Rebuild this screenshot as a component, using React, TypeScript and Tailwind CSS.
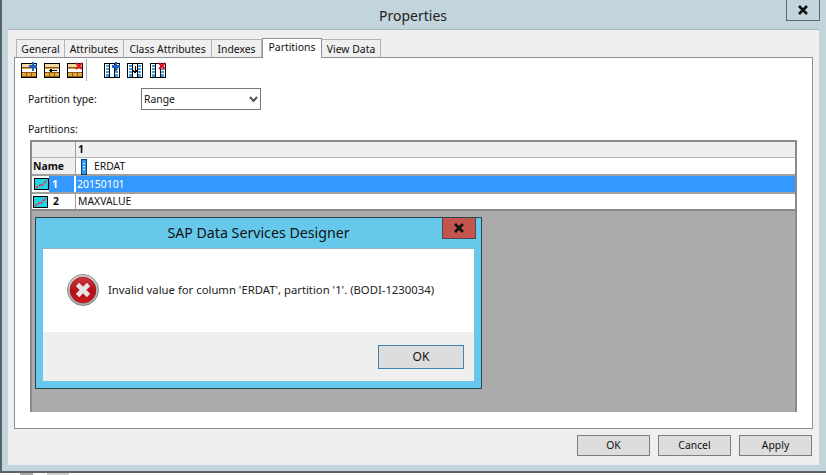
import type { ReactNode } from "react"

const ui = { fontFamily: '"Noto Sans", sans-serif' }

const Frame = ({ children }: { children: ReactNode }) => (
  <svg width="16" height="16" viewBox="0 0 16 16" shapeRendering="crispEdges" className="block">
    {children}
  </svg>
)

const RowsBase = () => (
  <>
    <rect x="0.5" y="1.5" width="15" height="14" fill="#fff" stroke="#000" />
    <path d="M1 2h14v3H1z" fill="#f3d9a6" />
    <path d="M1 6h14v1H1z" fill="#d8a040" />
    <path d="M1 11h14v3H1z" fill="#e3a63a" />
    <path d="M1 14h14v1H1z" fill="#8a5a10" />
    <path d="M1 5.5h14M1 10.5h14M5.5 11v3M10.5 11v3" stroke="#8a5a10" />
  </>
)

const ColsBase = () => (
  <>
    <rect x="0.5" y="1.5" width="15" height="14" fill="#fff" stroke="#000" />
    <path d="M2 3h3v12H2zM11 3h3v12h-3z" fill="#3f9fe0" />
    <path d="M2 5.5h3M2 8.5h3M2 11.5h3M11 5.5h3M11 8.5h3M11 11.5h3" stroke="#fff" />
    <path d="M5.5 2v13M10.5 2v13" stroke="#000" />
  </>
)

const Plus = () => <path d="M11 0h2v3h3v3h-3v3h-2V6H8V3h3z" fill="#1f5fc4" />
const Cross = () => <path d="M9 1l6 6M15 1l-6 6" stroke="#e8101c" strokeWidth="2" shapeRendering="auto" fill="none" />

const RangeIcon = () => (
  <svg width="15" height="12" viewBox="0 0 15 12" shapeRendering="crispEdges" className="block">
    <rect x="0.5" y="0.5" width="14" height="11" fill="#22d3e6" stroke="#000" />
    <path d="M2 10l4-3 1 1 5-5 1-1" stroke="#e8304a" strokeWidth="1.6" strokeDasharray="2.5 1" fill="none" shapeRendering="auto" />
  </svg>
)

const WinButton = ({ label, className }: { label: string; className: string }) => (
  <div className={`flex items-center justify-center border bg-[#dddddd] text-[#111] ${className}`}>{label}</div>
)

const CloseX = () => (
  <svg width="14" height="10" viewBox="0 0 14 10">
    <path d="M3 1l8 8M11 1L3 9" stroke="#111" strokeWidth="2.6" />
  </svg>
)

const tabs = ["General", "Attributes", "Class Attributes", "Indexes", "Partitions", "View Data"]
const tabWidths = [49, 59, 88, 50, 60, 59]

export default function App() {
  return (
    <div className="relative h-[475px] w-[826px] overflow-hidden bg-white text-[10.4px] text-[#111]" style={ui}>
      <div className="flex h-[473px] flex-col border-b-2 border-l-2 border-[#59636b] bg-[#c3d5dc]">
        {/* title bar */}
        <div className="relative flex h-[29px] shrink-0 items-center justify-center pr-[2px] pt-[2px] text-[14px] text-[#222]">
          Properties
          <div className="absolute right-[6px] top-0 flex h-[21px] w-[34px] items-center justify-center border-x border-b border-[#5e6670]">
            <CloseX />
          </div>
        </div>

        <div className="ml-[6px] mr-[7px] flex h-[436px] flex-col border-t border-[#a9b6bd] bg-[#efefef] px-[6px]">
          {/* tabs */}
          <div className="flex h-[27px] shrink-0 items-end pl-[2px]">
            {tabs.map((t, i) =>
              t === "Partitions" ? (
                <div
                  key={t}
                  style={{ width: tabWidths[i] }}
                  className="relative z-10 -mb-px flex h-[20px] items-center justify-center border-x border-t border-[#8d8f96] bg-white pb-[1px]"
                >
                  {t}
                </div>
              ) : (
                <div
                  key={t}
                  style={{ width: tabWidths[i] }}
                  className="flex h-[18px] items-center justify-center border-r border-t border-[#b4b4b8] bg-[#efefef] pt-[2px] first:border-l"
                >
                  {t}
                </div>
              ),
            )}
          </div>

          {/* pane */}
          <div className="flex h-[372px] shrink-0 flex-col border border-[#8d8f96] bg-white">
            <div className="flex h-[23px] shrink-0 items-center gap-[7px] pl-[6px]">
              <Frame><RowsBase /><Plus /></Frame>
              <Frame>
                <RowsBase />
                <path d="M13 8.5H6M8.5 6.5L6 8.5l2.5 2" stroke="#000" fill="none" />
              </Frame>
              <Frame><RowsBase /><Cross /></Frame>
              <div className="-ml-[4px] h-[22px] w-px bg-[#a8a8a8]" />
              <div className="w-[3px]" />
              <Frame><ColsBase /><Plus /></Frame>
              <Frame>
                <ColsBase />
                <path d="M8 4v6M6 8l2 3 2-3" stroke="#000" fill="none" />
              </Frame>
              <Frame><ColsBase /><Cross /></Frame>
            </div>

            <div className="ml-[13px] mt-[7px] flex h-[22px] shrink-0 items-center">
              <div className="w-[113px] pt-[2px]">Partition type:</div>
              <div className="flex h-[22px] w-[120px] items-center justify-between border border-[#777] bg-white pl-[2px] pr-[2px] pt-[1px]">
                Range
                <svg width="9" height="7" viewBox="0 0 9 7">
                  <path d="M1 1l3.5 4L8 1" stroke="#555" strokeWidth="2" fill="none" />
                </svg>
              </div>
            </div>

            <div className="ml-[13px] mt-[9px] h-[21px] shrink-0 leading-[20px]">Partitions:</div>

            {/* grid */}
            <div className="mx-[15px] flex h-[272px] shrink-0 flex-col border-2 border-b-0 border-[#8a8a8a] bg-[#ababab]">
              <div className="flex h-[16px] shrink-0 border-b border-[#b4b4b4] bg-[#efefef] font-bold">
                <div className="w-[44px] border-r border-[#a0a0a0]" />
                <div className="pl-[2px] leading-[15px]">1</div>
              </div>
              <div className="flex h-[18px] shrink-0 border-b-2 border-[#a0a0a0] bg-white">
                <div className="flex w-[44px] items-center border-r border-[#a0a0a0] bg-[#efefef] pl-[1px] pt-[1px] font-bold">Name</div>
                <div className="flex items-center gap-[7px] pl-[5px] pt-[1px]">
                  <svg width="6" height="16" viewBox="0 0 6 16" shapeRendering="crispEdges" className="block">
                    <rect x="0.5" y="0.5" width="5" height="15" fill="#2f9cf0" stroke="#0b3d78" />
                    <path d="M2 4h2M2 7h2M2 10h2" stroke="#d8f0ff" />
                  </svg>
                  ERDAT
                </div>
              </div>
              <div className="flex h-[18px] shrink-0 border-b-2 border-[#a0a0a0] bg-[#3399ff] text-white">
                <div className="flex w-[44px] items-center border-r-2 border-white bg-[#3399ff] font-bold">
                  <div className="flex h-full w-[17px] items-center justify-center bg-white pl-[1px]"><RangeIcon /></div>
                  <span className="pl-[3px] pt-[1px]">1</span>
                </div>
                <div className="flex items-center pl-[1px] pt-[2px]">20150101</div>
              </div>
              <div className="flex h-[17px] shrink-0 border-b-2 border-[#8a8a8a] bg-white">
                <div className="flex w-[44px] items-center border-r border-[#a0a0a0] pl-[1px] font-bold">
                  <div className="w-[16px]"><RangeIcon /></div>
                  <span className="pl-[4px]">2</span>
                </div>
                <div className="flex items-center pl-[2px]">MAXVALUE</div>
              </div>
            </div>
          </div>

          {/* footer buttons */}
          <div className="flex flex-1 items-start justify-end gap-[8px] pr-[1px] pt-[6px]">
            <WinButton label="OK" className="h-[21px] w-[73px] border-[#7d7d7d]" />
            <WinButton label="Cancel" className="h-[21px] w-[73px] border-[#7d7d7d]" />
            <WinButton label="Apply" className="h-[21px] w-[73px] border-[#7d7d7d]" />
          </div>
        </div>
      </div>

      {/* taskbar scraps below the window */}
      <div className="flex h-[2px] pl-[20px]">
        <div className="h-full w-[13px] bg-[#aaaaaa]" />
        <div className="ml-[14px] h-full w-[22px] bg-[#cfcfcf]" />
      </div>

      {/* message box */}
      <div className="absolute left-[35px] top-[217px] flex h-[172px] w-[447px] flex-col border border-[#2c4450] bg-[#66c9eb] px-[7px] pb-[7px]">
        <div className="relative flex h-[30px] shrink-0 items-center justify-center pb-[1px] text-[14.2px] text-[#111]">
          SAP Data Services Designer
          <div className="absolute -right-[2px] top-0 flex h-[21px] w-[34px] items-center justify-center border-x border-b border-[#4a4a4a] bg-[#c4544e]">
            <CloseX />
          </div>
        </div>
        <div className="flex h-[84px] shrink-0 items-center gap-[9px] border-t border-[#8fb4c4] bg-white pb-[1px] pl-[24px]">
          <svg width="32" height="32" viewBox="0 0 32 32" className="block shrink-0">
            <defs>
              <linearGradient id="ring" x1="0" y1="0" x2="0" y2="1">
                <stop offset="0" stopColor="#d8d8d8" />
                <stop offset="1" stopColor="#a8a8a8" />
              </linearGradient>
              <linearGradient id="disc" x1="0" y1="0" x2="0" y2="1">
                <stop offset="0" stopColor="#d0363e" />
                <stop offset="0.55" stopColor="#b01018" />
                <stop offset="1" stopColor="#d01c20" />
              </linearGradient>
            </defs>
            <circle cx="16" cy="16" r="15.5" fill="url(#ring)" stroke="#8a8a8a" strokeWidth="1" />
            <circle cx="16" cy="16" r="13" fill="url(#disc)" stroke="#7a1014" strokeWidth="0.5" />
            <path d="M10.5 10.5l11 11M21.5 10.5l-11 11" stroke="#e8e4e4" strokeWidth="4.6" />
          </svg>
          <div className="text-[11.3px] text-[#222]">Invalid value for column 'ERDAT', partition '1'. (BODI-1230034)</div>
        </div>
        <div className="flex flex-1 items-start justify-end bg-[#efefef] pr-[10px] pt-[13px] text-[12px]">
          <WinButton label="OK" className="h-[24px] w-[86px] border-[#3f83b5]" />
        </div>
      </div>
    </div>
  )
}
